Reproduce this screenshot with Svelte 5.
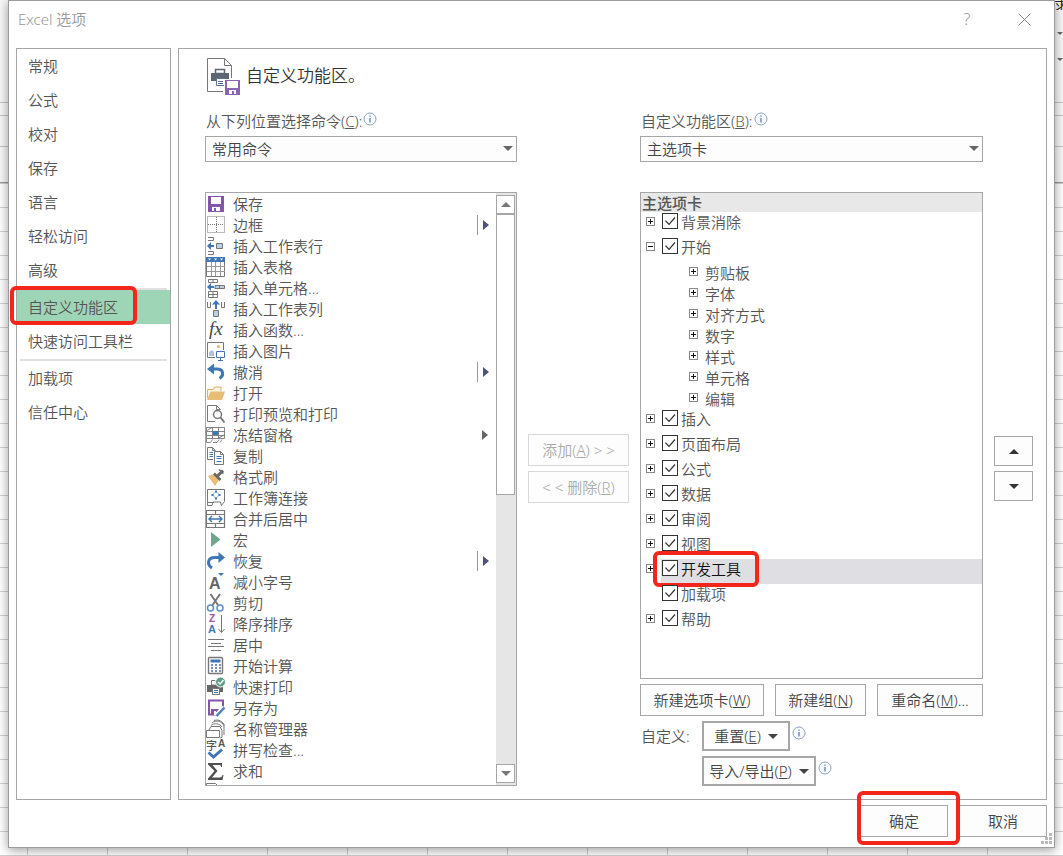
<script>
  const categories = [
    ['常规', '公式', '校对', '保存', '语言', '轻松访问', '高级'],
    ['自定义功能区', '快速访问工具栏'],
    ['加载项', '信任中心']
  ];
  const commands = [
    { icon: 'save', name: '保存' },
    { icon: 'border', name: '边框', more: 'split' },
    { icon: 'row', name: '插入工作表行' },
    { icon: 'table', name: '插入表格' },
    { icon: 'cells', name: '插入单元格...' },
    { icon: 'column', name: '插入工作表列' },
    { icon: 'fx', name: '插入函数...' },
    { icon: 'picture', name: '插入图片' },
    { icon: 'undo', name: '撤消', more: 'split' },
    { icon: 'open', name: '打开' },
    { icon: 'preview', name: '打印预览和打印' },
    { icon: 'freeze', name: '冻结窗格', more: 'menu' },
    { icon: 'copy', name: '复制' },
    { icon: 'brush', name: '格式刷' },
    { icon: 'links', name: '工作簿连接' },
    { icon: 'merge', name: '合并后居中' },
    { icon: 'macro', name: '宏' },
    { icon: 'redo', name: '恢复', more: 'split' },
    { icon: 'shrink', name: '减小字号' },
    { icon: 'cut', name: '剪切' },
    { icon: 'sort', name: '降序排序' },
    { icon: 'center', name: '居中' },
    { icon: 'calc', name: '开始计算' },
    { icon: 'print', name: '快速打印' },
    { icon: 'saveas', name: '另存为' },
    { icon: 'names', name: '名称管理器' },
    { icon: 'spell', name: '拼写检查...' },
    { icon: 'sum', name: '求和' },
    { icon: 'paste', name: '' }
  ];
  const groups = ['剪贴板', '字体', '对齐方式', '数字', '样式', '单元格', '编辑'];
  let selected = $state('自定义功能区');
  let tabs = $state([
    { name: '背景消除', on: true, kids: true },
    { name: '开始', on: true, kids: true, open: true },
    { name: '插入', on: true, kids: true },
    { name: '页面布局', on: true, kids: true },
    { name: '公式', on: true, kids: true },
    { name: '数据', on: true, kids: true },
    { name: '审阅', on: true, kids: true },
    { name: '视图', on: true, kids: true },
    { name: '开发工具', on: true, kids: true, current: true },
    { name: '加载项', on: true, kids: false },
    { name: '帮助', on: true, kids: true }
  ]);
</script>

{#snippet info()}
  <svg class="info" width="14" height="14" viewBox="0 0 14 14" aria-hidden="true">
    <circle cx="7" cy="7" r="6" fill="#fbfcff" stroke="#8aa3c9" />
    <path d="M7 6v4.500M7 3.400v1.400" stroke="#4f6fae" stroke-width="1.200" />
  </svg>
{/snippet}

{#snippet caret()}
  <svg class="caret" width="10" height="5" viewBox="0 0 10 5" aria-hidden="true"><path d="M0 0h10L5 5z" fill="currentColor" /></svg>
{/snippet}

{#snippet glyph(kind)}
  <svg class="glyph" width="20" height="20" viewBox="0 0 20 20" fill="none" stroke="#777" aria-hidden="true">
    {#if kind === 'save'}
      <path d="M2 2h16v16H2z" fill="#8455a8" stroke="none" />
      <path d="M5 3h10v7H5zM6 13h8v4H6z" fill="#fff" stroke="none" />
      <path d="M8 14h2v3H8z" fill="#8455a8" stroke="none" />
    {:else if kind === 'border'}
      <path d="M1.500 1.500h17v16h-17zM10.500 2v16M2 9.500h16" stroke-dasharray="1 1" />
    {:else if kind === 'row'}
      <path d="M2 1.500h5.500v3H2M2 15.500h5.500v3H2" />
      <path d="M10.500 7.500h6v5h-6z" fill="#b9cfe3" />
      <path d="M8 10H3" stroke="#3f77b5" stroke-width="2" />
      <path d="M1 10l4-4v8z" fill="#3f77b5" stroke="none" />
    {:else if kind === 'table'}
      <path d="M.5 4.500h18v15H.5z" />
      <path d="M5.500 5v14M9.500 5v14M14.500 5v14M1 9.500h18M1 14.500h18" stroke="#999" />
      <path d="M0 0h19v5H0z" fill="#3f77b5" stroke="none" />
      <path d="M2 1.500h3L3.500 3.500zM8 1.500h3L9.500 3.500zM14 1.500h3l-1.500 2z" fill="#fff" stroke="none" />
    {:else if kind === 'cells'}
      <path d="M2.500 1.500h9v3h-9zM7 1.500v3M2.500 13.500h9v6h-9zM7 13.500v6M2.500 16.500h9" />
      <path d="M9 7.500h9.500v3H9zM13.500 7.500v3" fill="#b9cfe3" />
      <path d="M8 9H4" stroke="#3f77b5" stroke-width="2" />
      <path d="M1 9l4-4v8z" fill="#3f77b5" stroke="none" />
    {:else if kind === 'column'}
      <path d="M1.500 3v5.500h3V3M15.500 3v5.500h3V3" />
      <path d="M7.500 11.500h5v6h-5z" fill="#b9cfe3" />
      <path d="M10 10V5" stroke="#3f77b5" stroke-width="2" />
      <path d="M10 1l4 4.500H6z" fill="#3f77b5" stroke="none" />
    {:else if kind === 'fx'}
      <text x="3" y="15" class="fx">fx</text>
    {:else if kind === 'picture'}
      <path d="M9 16.500H1.500v-15h16V9" />
      <circle cx="12.500" cy="5.500" r="1.500" fill="#e3b565" stroke="none" />
      <path d="M3 15v-4l3-2 2 2v4z" fill="#b6bfe0" stroke="none" />
      <path d="M10.500 10.500h8v6h-8zM14.500 17v2M12 19.500h5" stroke="#3f77b5" fill="#fff" />
    {:else if kind === 'undo'}
      <path d="M4 7h7c7 0 7 7 2.500 9.500" stroke="#3f77b5" stroke-width="3" />
      <path d="M1 7l7-5.500v11z" fill="#3f77b5" stroke="none" />
    {:else if kind === 'open'}
      <path d="M1.500 15V6.500h6l1-2.500h6.500v4" stroke="#e0ae62" fill="#fdf3df" />
      <path d="M1 17l3.500-8.500H19L16 17z" fill="#e9bd78" stroke="none" />
    {:else if kind === 'preview'}
      <path d="M9 17.500H1.500v-16h9l4 4M10.500 1.500v4h4" />
      <circle cx="11.500" cy="10.500" r="4" fill="#fff" stroke-width="1.500" />
      <path d="M14.500 13.500l4 5" stroke-width="2" />
    {:else if kind === 'freeze'}
      <path d="M.5 2.500h18v11H.5zM1 6.500h18M1 10.500h18M6.500 2v12M12.500 2v12M1 5.500l5-3M13 13l5-3M.5 13.500v4h4l2-3M7 17.500h4l2-3M14 17.500l2-3" stroke-width=".9" />
      <path d="M7 6h5v4H7z" fill="#3f77b5" stroke="none" />
    {:else if kind === 'copy'}
      <path d="M7 13.500H1.500v-12h5l3 3M6.500 1.500v3h3" />
      <path d="M8.500 5.500h6l3 3v10h-9zM14.500 5.500v3h3" fill="#fff" />
      <path d="M3.500 6.500H7M3.500 8.500H7M3.500 10.500H7M10.500 10.500h5M10.500 12.500h5M10.500 15.500h5" stroke="#3f77b5" />
    {:else if kind === 'brush'}
      <path d="M2 9l6-2 5 6-4 6z" fill="#e9bd78" stroke="none" />
      <path d="M8 6.500l6.500 6.500" stroke="#666" stroke-width="2.500" />
      <path d="M11.500 9l5.500-5.500" stroke="#666" stroke-width="3" />
      <path d="M13 2.500l4.500 4" stroke="#666" stroke-width="1.500" />
    {:else if kind === 'links'}
      <path d="M1.500 14.500v-13h17v12l-3 4-1-3.500H7l-1 3.500H1.500v-3H8" />
      <path d="M10 3.500L13.500 7 10 10.500 6.500 7z" stroke="#8eb0d4" />
      <path d="M9 2.500h2v2H9zM9 9.500h2v2H9zM5.500 6h2v2h-2zM12.500 6h2v2h-2z" fill="#3f77b5" stroke="none" />
    {:else if kind === 'merge'}
      <path d="M.5 1.500h18v17H.5zM1 5.500h18M1 14.500h18M9.500 1.500v4M9.500 14.500v4" stroke-width="1.200" />
      <path d="M3 10h13M6 7l-3 3 3 3M13 7l3 3-3 3" stroke="#3f77b5" stroke-width="1.400" />
    {:else if kind === 'macro'}
      <path d="M5 2l9.500 7.500L5 17z" fill="#6aa78d" stroke="none" />
    {:else if kind === 'redo'}
      <path d="M15 6.500H9c-8 0-8 7-3 10.500" stroke="#3f77b5" stroke-width="3" />
      <path d="M19 6.500l-6.500-5.500v11z" fill="#3f77b5" stroke="none" />
    {:else if kind === 'shrink'}
      <text x="3" y="17" class="letter" font-size="16" fill="#666">A</text>
      <path d="M12 1h6l-3 3z" fill="#3f77b5" stroke="none" />
    {:else if kind === 'cut'}
      <path d="M4.500 1l7.500 11M14 1L6.500 12" stroke-width="2" />
      <circle cx="4.500" cy="15" r="3" stroke="#5a8fc6" stroke-width="1.500" />
      <circle cx="14" cy="15" r="3" stroke="#5a8fc6" stroke-width="1.500" />
    {:else if kind === 'sort'}
      <text x="3" y="8" class="letter" font-size="10" fill="#9355a8">Z</text>
      <text x="2" y="19" class="letter" font-size="11" fill="#3f77b5">A</text>
      <path d="M15.500 1v17M12.500 15l3 3.500 3-3.500" />
    {:else if kind === 'center'}
      <path d="M2 4.500h16M5 8.500h10M2 11.500h16M5 15.500h10" />
    {:else if kind === 'calc'}
      <rect x="2.500" y="1.500" width="14" height="16" rx="1" stroke-width="1.400" />
      <path d="M4.500 3.500h10v3h-10z" fill="#3f77b5" stroke="none" />
      <path d="M5 9h10M5 12h10M5 15h10" stroke="#4a6d92" stroke-width="1.600" stroke-dasharray="2 2" />
    {:else if kind === 'print'}
      <path d="M1 8h16v7H1z" fill="#666" stroke="none" />
      <path d="M5.500 8V3.500h8V8z" fill="#fff" />
      <path d="M6.500 11.500h7v6h-7z" fill="#fff" />
      <path d="M8 13.500h4M8 15.500h4" stroke="#3f77b5" />
      <circle cx="14.500" cy="5" r="5" fill="#5f9e85" stroke="#fff" />
      <path d="M12 5l2 2 3.500-4" stroke="#fff" stroke-width="1.400" />
    {:else if kind === 'saveas'}
      <path d="M17 9V2.500H3v14h7" stroke="#8455a8" stroke-width="2" />
      <path d="M5 11h8l-4 6H5z" fill="#8455a8" stroke="none" />
      <path d="M8 13h2v4H8z" fill="#fff" stroke="none" />
      <path d="M10 18l8.500-8.500" stroke="#fff" stroke-width="5" />
      <path d="M10.500 18l8-8.500" stroke="#4a82bd" stroke-width="2.500" />
    {:else if kind === 'names'}
      <path d="M.5 11.500h13v7H.5zM3 11l2-3.500h9l2 4v7l-2 .5M5 6.500c3-3 9-2 11 1.500M6 4c4-3.500 10-2 12 3v9M8 1.500c5-1.500 9 1 10.500 5" />
    {:else if kind === 'spell'}
      <text x="0" y="10" class="han">字</text>
      <text x="12" y="7" class="letter" font-size="10" fill="#555">A</text>
      <path d="M2.500 12.500l5 4.500 8.500-7.500" stroke="#3f77b5" stroke-width="3" />
    {:else if kind === 'sum'}
      <path d="M2 2h14v4h-1c0-1.500-.5-2-2-2H6.500l5 6-5.500 6.500h8c1.500 0 2-1 2.500-2.500h1l-1 5H2v-1.500L8.500 10 2 3.500z" fill="#505050" stroke="none" />
    {:else}
      <path d="M.5 18V1.500h9l3 3M3.500 18V3.500h9V18" />
    {/if}
  </svg>
{/snippet}

<div class="desktop">
  <div class="sheet" aria-hidden="true">
    <span class="sliver">求</span>
    {@render caret()}
    {@render caret()}
  </div>
  <section class="dialog" aria-label="Excel 选项">
    <header>
      <h1>Excel 选项</h1>
      <button class="help" aria-label="帮助">?</button>
      <button class="close" aria-label="关闭">
        <svg width="13" height="13" viewBox="0 0 13 13"><path d="M.5.5l12 12M12.500.5l-12 12" stroke="#888" fill="none" /></svg>
      </button>
    </header>

    <div class="body">
      <nav>
        {#each categories as part}
          <div class="part">
            {#each part as name}
              <button class:selected={selected === name} onclick={() => (selected = name)}>
                {name}{#if name === '自定义功能区'}<span class="mark"></span>{/if}
              </button>
            {/each}
          </div>
        {/each}
      </nav>

      <main>
        <div class="heading">
          <svg width="34" height="38" viewBox="0 0 34 38" fill="none" aria-hidden="true">
            <path d="M17 34.500H1.500v-33h17l7 7V21M18.500 1.500v7h7" stroke="#777" />
            <path d="M5 16h4v-1h10v1h4v8H5z" fill="#5c6670" />
            <path d="M9.500 16.500v-4h9v4z" fill="#fff" stroke="#5c6670" stroke-width="1.500" />
            <path d="M10.500 21.500h8v7h-8z" fill="#fff" stroke="#5c7591" />
            <path d="M12 24.500h5M12 26.500h5" stroke="#4a6d92" />
            <path d="M18 22h16v16H18z" fill="#fff" />
            <path d="M19 23h15v15H19z" fill="#8e62b3" />
            <path d="M21 24h11v7H21zM23 33h7v4h-7z" fill="#fff" />
            <path d="M26 34h2v3h-2z" fill="#8e62b3" />
          </svg>
          <h2>自定义功能区。</h2>
        </div>

        <div class="columns">
          <div class="from">
            <div class="caption"><label for="source">从下列位置选择命令(<u>C</u>):</label>{@render info()}</div>
            <div class="drop">
              <select id="source"><option>常用命令</option></select>
              {@render caret()}
            </div>
            <div class="list">
              <ul>
                {#each commands as c}
                  <li>
                    {@render glyph(c.icon)}
                    <span class="name">{c.name}</span>
                    {#if c.more}
                      <span class="more {c.more}">
                        <svg width="6" height="10" viewBox="0 0 6 10"><path d="M0 0l6 5-6 5z" fill="currentColor" /></svg>
                      </span>
                    {/if}
                  </li>
                {/each}
              </ul>
              <div class="scroll">
                <button aria-label="向上滚动"><svg width="10" height="5" viewBox="0 0 10 5"><path d="M0 5h10L5 0z" fill="#777" /></svg></button>
                <div class="track"><div class="thumb"></div></div>
                <button aria-label="向下滚动"><svg width="10" height="5" viewBox="0 0 10 5"><path d="M0 0h10L5 5z" fill="#777" /></svg></button>
              </div>
            </div>
          </div>

          <div class="transfer">
            <button class="btn" disabled>添加(<u>A</u>) &gt; &gt;</button>
            <button class="btn" disabled>&lt; &lt; 删除(<u>R</u>)</button>
          </div>

          <div class="to">
            <div class="caption"><label for="target">自定义功能区(<u>B</u>):</label>{@render info()}</div>
            <div class="drop">
              <select id="target"><option>主选项卡</option></select>
              {@render caret()}
            </div>
            <div class="tree">
              <div class="treehead">主选项卡</div>
              {#each tabs as t}
                <div class="tab">
                  {#if t.kids}
                    <button class="fold" class:open={t.open} aria-label={t.name} onclick={() => (t.open = !t.open)}></button>
                  {:else}
                    <span class="nofold"></span>
                  {/if}
                  <label class:current={t.current}>
                    <input type="checkbox" bind:checked={t.on} />{t.name}
                    {#if t.current}<span class="mark"></span>{/if}
                  </label>
                </div>
                {#if t.name === '开始' && t.open}
                  {#each groups as g}
                    <div class="group"><button class="fold" aria-label={g}></button>{g}</div>
                  {/each}
                {/if}
              {/each}
            </div>
            <div class="actions">
              <button class="btn w">新建选项卡(<u>W</u>)</button>
              <button class="btn n">新建组(<u>N</u>)</button>
              <button class="btn m">重命名(<u>M</u>)...</button>
            </div>
            <div class="custom">
              <span>自定义:</span>
              <div><button class="btn menu reset">重置(<u>E</u>){@render caret()}</button>{@render info()}</div>
              <div class="second"><button class="btn menu">导入/导出(<u>P</u>){@render caret()}</button>{@render info()}</div>
            </div>
          </div>

          <div class="order">
            <button class="btn" aria-label="上移"><svg width="10" height="5" viewBox="0 0 10 5"><path d="M0 5h10L5 0z" fill="#333" /></svg></button>
            <button class="btn" aria-label="下移"><svg width="10" height="5" viewBox="0 0 10 5"><path d="M0 0h10L5 5z" fill="#333" /></svg></button>
          </div>
        </div>
      </main>
    </div>

    <footer>
      <button class="btn ok">确定<span class="mark"></span></button>
      <button class="btn">取消</button>
      <svg class="grip" width="12" height="12" viewBox="0 0 12 12" aria-hidden="true">
        <path d="M8 0h3v3H8zM4 4h3v3H4zM8 4h3v3H8zM0 8h3v3H0zM4 8h3v3H4zM8 8h3v3H8z" fill="#b9b9b9" />
      </svg>
    </footer>
  </section>
</div>

<style>
  :global(body) { margin: 0; background: #fff; }
  * { box-sizing: border-box; }
  .desktop {
    position: relative;
    overflow: hidden;
    min-height: 100vh;
    padding: 0 8px 8px;
    font: 350 15px/20px "Noto Sans", "Noto Sans CJK SC", sans-serif;
    color: #555;
  }
  button, select { font: inherit; color: inherit; margin: 0; padding: 0; border: 0; background: none; border-radius: 0; }
  h1, h2, ul { margin: 0; padding: 0; font: inherit; list-style: none; }
  svg { display: block; flex: none; overflow: visible; }
  .sheet {
    position: absolute;
    inset: 0;
    display: flex;
    flex-direction: column;
    align-items: flex-end;
    gap: 21px;
    color: #666;
    background:
      linear-gradient(#c4c4c4, #c4c4c4) 0 102px / 100% 1px no-repeat,
      linear-gradient(#c4c4c4, #c4c4c4) 0 115px / 100% 1px no-repeat,
      linear-gradient(#c4c4c4, #c4c4c4) 0 146px / 100% 1px no-repeat,
      linear-gradient(#999, #999) 0 182px / 100% 1px no-repeat,
      linear-gradient(#f8f8f8, #f8f8f8) 0 0 / 100% 183px no-repeat,
      repeating-linear-gradient(90deg, transparent 0 27px, #cfcfcf 27px 28px, transparent 28px 80px),
      repeating-linear-gradient(transparent 0 15px, #cfcfcf 15px 16px, transparent 16px 24px),
      #fff;
  }
  .sliver { width: 9px; height: 10px; line-height: 10px; overflow: hidden; color: #222; }
  .sheet .caret { width: 6px; }
  .dialog {
    position: relative;
    background: #fff;
    border: 1px solid #9c9c9c;
    box-shadow: 0 2px 10px rgba(0, 0, 0, .4);
  }
  header { display: flex; align-items: center; height: 36px; margin-bottom: 11px; padding-right: 23px; color: #999; }
  h1 { flex: 1; padding-left: 9px; }
  .help { width: 20px; margin-right: 41px; font-size: 16px; }
  .close { width: 13px; height: 13px; }
  .body { display: grid; grid-template-columns: 155px 1fr; gap: 7px; padding: 0 7px; }
  nav, main { border: 1px solid #a6a6a6; }
  .part + .part::before { content: ""; display: block; height: 1px; margin: 0 3px; border-bottom: 2px solid #e1e1e1; }
  nav button { position: relative; display: block; width: 100%; height: 34px; padding-left: 11px; text-align: left; }
  nav .selected { background: #9fd5b7; }
  .mark { position: absolute; border: 4px solid #f4251b; border-radius: 6px; pointer-events: none; }
  nav .mark { left: -7px; right: 33px; top: -4px; bottom: -1px; }
  main { padding: 8px 13px 13px 26px; min-width: 0; }
  .heading { display: flex; align-items: center; gap: 6px; height: 38px; padding-left: 1px; }
  h2 { font-size: 17px; color: #333; }
  .columns { display: grid; grid-template-columns: minmax(0, 312fr) 101px minmax(0, 343fr) 39px; gap: 11px; padding-top: 16px; }
  .caption { display: flex; align-items: flex-start; height: 25px; padding-left: 1px; }
  .info { margin: 1px 0 0 1px; }
  .drop { position: relative; }
  .drop select { appearance: none; display: block; width: 100%; height: 26px; padding-left: 6px; border: 1px solid #a6a6a6; background: #fdfdfd; color: #444; }
  .drop .caret { position: absolute; right: 4px; top: 10px; color: #666; pointer-events: none; }
  .list { display: flex; height: 594px; margin-top: 30px; border: 1px solid #a6a6a6; }
  .list ul { flex: 1; overflow: hidden; min-width: 0; }
  li { display: flex; align-items: center; height: 21px; }
  .name { flex: 1; padding-left: 7px; }
  .more { width: 19px; height: 20px; display: flex; align-items: center; }
  .split { padding-left: 5px; border-left: 1px solid #999; color: #4d5475; }
  .menu.more { padding-left: 5px; color: #666; }
  .scroll { width: 20px; padding: 2px 1px 2px 0; display: flex; flex-direction: column; background: #e6e6e6; }
  .scroll button { height: 19px; display: grid; place-items: center; border: 1px solid #a6a6a6; background: #fff; }
  .track { flex: 1; }
  .thumb { height: 51%; border: 1px solid #a6a6a6; background: #fff; }
  .btn { position: relative; height: 32px; border: 1px solid #a6a6a6; background: #fdfdfd; color: #444; white-space: nowrap; }
  .transfer { display: flex; flex-direction: column; gap: 5px; padding-top: 323px; }
  .transfer .btn { border-color: #d8d8d8; color: #aaa; }
  .order { display: flex; flex-direction: column; gap: 5px; padding-top: 325px; }
  .order .btn { height: 30px; display: grid; place-items: center; }
  .tree { height: 487px; margin-top: 30px; border: 1px solid #a6a6a6; }
  .treehead { height: 19px; padding-left: 1px; background: #e8e8e8; font-weight: 500; }
  .tab { display: flex; height: 25px; padding-left: 5px; }
  .fold, .nofold { flex: none; width: 9px; height: 9px; margin-top: 5px; }
  .fold {
    border: 1px solid #888;
    background:
      linear-gradient(#111, #111) center / 5px 1px no-repeat,
      linear-gradient(#111, #111) center / 1px 5px no-repeat;
  }
  .fold.open { background: linear-gradient(#111, #111) center / 5px 1px no-repeat; }
  .tab label { position: relative; flex: 1; display: flex; margin-left: 6px; padding-left: 1px; }
  .current { background: #dfdee3; color: #111; }
  .current .mark { left: -8px; top: -8px; width: 106px; height: 36px; }
  input { appearance: none; flex: none; position: relative; width: 16px; height: 16px; margin: 1px 3px 0 0; border: 1px solid #333; background: #fff; }
  input:checked::after {
    content: "";
    position: absolute;
    inset: 0;
    background: #333;
    clip-path: polygon(14% 50%, 21% 44%, 43% 67%, 82% 21%, 89% 28%, 43% 80%);
  }
  .group { display: flex; height: 21px; padding-left: 48px; line-height: 22px; }
  .group .fold { margin-right: 7px; }
  .actions { display: flex; justify-content: space-between; gap: 11px; margin-top: 5px; }
  .w { flex: 0 0 124px; }
  .n { flex: 0 0 91px; }
  .m { flex: 0 0 106px; }
  .custom { display: grid; grid-template-columns: 62px 1fr; gap: 5px 0; margin-top: 5px; }
  .custom span { padding-left: 1px; line-height: 30px; }
  .custom div { display: flex; }
  .custom .second { grid-column: 2; }
  .custom .info { margin: 5px 0 0 2px; }
  .btn.menu { display: flex; align-items: center; justify-content: center; width: 114px; height: 30px; border-width: 2px; }
  .btn.reset { width: 88px; }
  .menu .caret { margin-left: 7px; }
  footer { position: relative; display: flex; justify-content: flex-end; gap: 11px; padding: 5px 7px 10px; }
  footer .btn { width: 88px; }
  .ok .mark { left: -4px; right: -13px; top: -15px; bottom: -9px; }
  footer .ok { z-index: 1; }
  .grip { position: absolute; right: 1px; bottom: 2px; }
  .fx { font: italic 19px "Liberation Serif", serif; fill: #444; stroke: none; }
  .letter { font-family: "Liberation Sans", sans-serif; font-weight: 700; stroke: none; }
  .han { font: 500 11px "Noto Sans CJK SC", sans-serif; fill: #555; stroke: none; }
</style>
